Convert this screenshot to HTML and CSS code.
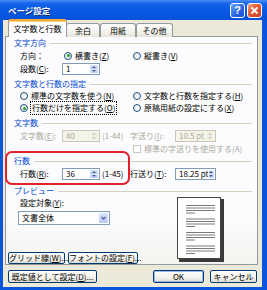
FILE: index.html
```html
<!DOCTYPE html>
<html lang="ja">
<head>
    <meta charset="UTF-8">
    <title>ページ設定</title>
    <link rel="stylesheet" href="styles.css">
</head>
<body>
<div class="window">
    <div class="titlebar">
        <span class="title">ページ設定</span>
        <span class="title-btn help">?</span>
        <span class="title-btn close">
            <svg width="9" height="9" viewBox="0 0 9 9"><path d="M1.5 1.5L7.5 7.5M7.5 1.5L1.5 7.5" stroke="#fff" stroke-width="1.8"/></svg>
        </span>
    </div>

    <div class="dialog">
        <div class="tabs">
            <div class="tab active">文字数と行数</div>
            <div class="tab w34">余白</div>
            <div class="tab w36">用紙</div>
            <div class="tab w37">その他</div>
        </div>

        <div class="panel">
            <div class="group">文字方向</div>
            <div class="row h13">
                <span class="label">方向：</span>
                <span class="item w71"><i class="radio checked"></i>横書き(<u>Z</u>)</span>
                <span class="item"><i class="radio"></i>縦書き(<u>V</u>)</span>
            </div>
            <div class="row h14">
                <span class="label">段数(<u>C</u>):</span>
                <span class="spin w38"><span class="val">1</span><span class="arrows"><i class="up"></i><i class="down"></i></span></span>
            </div>

            <div class="group mt2">文字数と行数の指定</div>
            <div class="row">
                <span class="item w113"><i class="radio"></i>標準の文字数を使う(<u>N</u>)</span>
                <span class="item"><i class="radio"></i>文字数と行数を指定する(<u>H</u>)</span>
            </div>
            <div class="row">
                <span class="item w113"><i class="radio checked"></i><span class="focus">行数だけを指定する(<u>O</u>)</span></span>
                <span class="item"><i class="radio"></i>原稿用紙の設定にする(<u>X</u>)</span>
            </div>

            <div class="group mt3">文字数</div>
            <div class="row h13 disabled">
                <span class="label">文字数(<u>E</u>):</span>
                <span class="spin w38 off"><span class="val">40</span><span class="arrows"><i class="up"></i><i class="down"></i></span></span>
                <span class="range">(1-44)</span>
                <span class="label w45">字送り(<u>I</u>):</span>
                <span class="spin w41 off"><span class="val">10.5 pt</span><span class="arrows"><i class="up"></i><i class="down"></i></span></span>
            </div>
            <div class="row h13 disabled">
                <span class="item indent"><i class="check"></i>標準の字送りを使用する(A)</span>
            </div>

            <div class="group">行数</div>
            <div class="row h13">
                <span class="label">行数(<u>R</u>):</span>
                <span class="spin w38"><span class="val">36</span><span class="arrows"><i class="up"></i><i class="down"></i></span></span>
                <span class="range">(1-45)</span>
                <span class="label w45">行送り(<u>T</u>):</span>
                <span class="spin w41"><span class="val">18.25 pt</span><span class="arrows"><i class="up"></i><i class="down"></i></span></span>
            </div>

            <div class="group mt5">プレビュー</div>
            <div class="preview">
                <div class="preview-left">
                    <div class="row">設定対象(<u>Y</u>):</div>
                    <div class="select">
                        <span class="val">文書全体</span>
                        <span class="drop">
                            <svg width="5" height="4" viewBox="0 0 5 4"><path d="M0.5 0.8L2.5 3L4.5 0.8" fill="none" stroke="#4d6185" stroke-width="1.2"/></svg>
                        </span>
                    </div>
                    <div class="panel-buttons">
                        <button class="btn w57">グリッド線(<u>W</u>)...</button>
                        <button class="btn w70">フォントの設定(<u>F</u>)...</button>
                    </div>
                </div>
                <svg class="page" width="47" height="65" viewBox="0 0 47 65">
                    <rect x="2" y="2" width="45" height="63" fill="#3a3a3a"/>
                    <rect x="0.5" y="0.5" width="43" height="61" fill="#fff" stroke="#444"/>
                    <g fill="#7a7a7a">
                        <rect x="9" y="8" width="29" height="1"/>
                        <rect x="9" y="10.5" width="29" height="1"/>
                        <rect x="9" y="13" width="29" height="1"/>
                        <rect x="9" y="15.5" width="9" height="1"/>
                        <rect x="9" y="21.5" width="29" height="1"/>
                        <rect x="9" y="24" width="29" height="1"/>
                        <rect x="9" y="26.5" width="29" height="1"/>
                        <rect x="9" y="29" width="9" height="1"/>
                        <rect x="9" y="35" width="29" height="1"/>
                        <rect x="9" y="37.5" width="29" height="1"/>
                        <rect x="9" y="40" width="29" height="1"/>
                        <rect x="9" y="42.5" width="9" height="1"/>
                        <rect x="9" y="48.5" width="29" height="1"/>
                        <rect x="9" y="51" width="29" height="1"/>
                        <rect x="9" y="53.5" width="29" height="1"/>
                        <rect x="9" y="56" width="9" height="1"/>
                    </g>
                </svg>
            </div>

            <div class="highlight"></div>
        </div>

        <div class="footer">
            <button class="btn w89">既定値として設定(<u>D</u>)...</button>
            <button class="btn default w51">OK</button>
            <button class="btn w47">キャンセル</button>
        </div>
    </div>
</div>
</body>
</html>
```

FILE: styles.css
```css
body {
    margin: 0;
    font-family: "Noto Sans CJK JP", "Liberation Sans", sans-serif;
    font-size: 8px;
    line-height: 12px;
    color: #000;
    background: #fff;
}

u {
    text-decoration: underline;
    text-underline-offset: 1px;
}

.window {
    width: 267px;
    height: 290px;
    display: flex;
    flex-direction: column;
    background: #0a55dc;
    overflow: hidden;
}

/* title bar */
.titlebar {
    height: 20px;
    display: flex;
    align-items: center;
    padding: 0 5px 0 8px;
    background: linear-gradient(to bottom, #4a8ef5 0%, #1463ea 18%, #0558e6 55%, #0752d8 100%);
}

.title {
    flex: 1;
    color: #fff;
    font-weight: bold;
    font-size: 8.5px;
    text-shadow: 1px 1px 0 #0b2c86;
}

.title-btn {
    width: 13px;
    height: 13px;
    border: 1px solid #fff;
    border-radius: 3px;
    margin-left: 2px;
    display: flex;
    align-items: center;
    justify-content: center;
    color: #fff;
    font-family: "Liberation Sans", sans-serif;
    font-weight: bold;
    font-size: 11px;
}

.help {
    background: linear-gradient(135deg, #6fa6ff, #2763e0 60%, #1a52d0);
}

.close {
    background: linear-gradient(135deg, #f3a07f, #e35a36 45%, #cc4020);
}

/* dialog body */
.dialog {
    flex: 1;
    margin: 0 5px 3px 3px;
    padding: 0 4px 0 2px;
    background: #ece9d8;
    display: flex;
    flex-direction: column;
}

.tabs {
    height: 17px;
    display: flex;
    align-items: flex-end;
    padding-left: 3px;
    position: relative;
    z-index: 1;
    margin-bottom: -1px;
}

.tab {
    height: 13px;
    border: 1px solid #919b9c;
    border-bottom: none;
    border-radius: 3px 3px 0 0;
    background: linear-gradient(to bottom, #fff, #f0efe9 70%, #e6e4db);
    text-align: center;
    line-height: 13px;
    box-sizing: content-box;
}

.tab.active {
    width: 57px;
    height: 16px;
    line-height: 16px;
    border-top: 2px solid #f4a93a;
    background: #fcfcfe;
    margin-right: -1px;
    box-shadow: inset 0 1px 0 #ffd37a;
}

.w34 { width: 32px; }
.w36 { width: 34px; }
.w37 { width: 35px; }

.panel {
    height: 227px;
    border: 1px solid #919b9c;
    background: linear-gradient(to bottom, #fcfcfe 80%, #f4f3ee);
    padding: 0 5px 0 8px;
    position: relative;
}

/* group headings */
.group {
    height: 12px;
    display: flex;
    align-items: center;
    color: #0046d5;
}

.group::after {
    content: "";
    flex: 1;
    height: 1px;
    margin-left: 4px;
    background: #d0d0bf;
}

.mt2 { margin-top: 2px; }
.mt3 { margin-top: 3px; }
.mt5 { margin-top: 5px; }

/* rows */
.row {
    height: 12px;
    display: flex;
    align-items: center;
    padding-left: 6px;
    white-space: nowrap;
}

.h13 { height: 13px; }
.h14 { height: 14px; }

.disabled {
    color: #aca899;
}

.label {
    width: 42px;
    flex: none;
}

.w45 { width: 45px; }

.item {
    display: flex;
    align-items: center;
    flex: none;
}

.w71 { width: 69px; padding-left: 2px; }
.w113 { width: 113px; }
.indent { margin-left: 113px; }

.radio {
    width: 6px;
    height: 6px;
    border: 1px solid #1c5180;
    border-radius: 50%;
    background: radial-gradient(circle at 60% 60%, #fff, #e3e2dc);
    margin-right: 3px;
    display: flex;
    align-items: center;
    justify-content: center;
}

.radio.checked::after {
    content: "";
    width: 3px;
    height: 3px;
    border-radius: 50%;
    background: #21a121;
}

.check {
    width: 6px;
    height: 6px;
    border: 1px solid #c9c7ba;
    background: #fff;
    margin-right: 3px;
}

.focus {
    outline: 1px dotted #000;
    outline-offset: 0;
    padding: 0 1px;
}

.range {
    width: 28px;
    padding-left: 2px;
    flex: none;
}

/* spin boxes */
.spin {
    height: 10px;
    border: 1px solid #7f9db9;
    background: #fff;
    display: flex;
    align-items: stretch;
    flex: none;
    color: #000;
}

.spin .val {
    flex: 1;
    padding-left: 3px;
    line-height: 10px;
}

.w38 { width: 36px; }
.w41 { width: 39px; }

.arrows {
    width: 8px;
    display: flex;
    flex-direction: column;
    padding: 1px 1px 1px 0;
    gap: 0;
}

.arrows i {
    flex: 1;
    background: linear-gradient(to bottom, #dce6fd, #b6c8f6);
    border-radius: 1px;
    display: flex;
    align-items: center;
    justify-content: center;
}

.arrows .up::after {
    content: "";
    border-left: 2px solid transparent;
    border-right: 2px solid transparent;
    border-bottom: 2px solid #4d6185;
}

.arrows .down::after {
    content: "";
    border-left: 2px solid transparent;
    border-right: 2px solid transparent;
    border-top: 2px solid #4d6185;
}

.spin.off {
    background: #f5f4ea;
    border-color: #c9c7ba;
    color: #aca899;
}

.spin.off .arrows i {
    background: #f0efe8;
}

.spin.off .arrows i::after {
    border-bottom-color: #c9c7ba;
    border-top-color: #c9c7ba;
}

/* preview */
.preview {
    display: flex;
}

.preview-left {
    width: 163px;
    flex: none;
}

.select {
    width: 90px;
    height: 12px;
    margin: 2px 0 0 4px;
    border: 1px solid #7f9db9;
    background: #fff;
    display: flex;
    align-items: stretch;
}

.select .val {
    flex: 1;
    padding-left: 3px;
    line-height: 12px;
}

.select .drop {
    width: 9px;
    margin: 1px;
    border-radius: 1px;
    background: linear-gradient(to bottom, #dce6fd, #b6c8f6);
    display: flex;
    align-items: center;
    justify-content: center;
}

.panel-buttons {
    display: flex;
    gap: 3px;
    margin: 27px 0 0 -6px;
}

.page {
    display: block;
}

/* red annotation box */
.highlight {
    position: absolute;
    left: -1px;
    top: 114px;
    width: 125px;
    height: 34px;
    box-sizing: border-box;
    border: 2px solid #e3202b;
    border-radius: 7px;
}

/* buttons */
.btn {
    height: 12px;
    padding: 0;
    border: 1px solid #003c74;
    border-radius: 2px;
    background: linear-gradient(to bottom, #fff, #f3f2ec 60%, #dedbd0);
    font-family: inherit;
    font-size: 8px;
    line-height: 10px;
    color: #000;
    box-sizing: border-box;
    white-space: nowrap;
}

.w57 { width: 57px; }
.w70 { width: 70px; }
.w89 { width: 89px; height: 13px; }
.w51 { width: 51px; height: 13px; margin-left: auto; }
.w47 { width: 47px; height: 13px; margin-left: 6px; }

.btn.default {
    box-shadow: inset 0 0 0 1px #9cb8ee;
}

.footer {
    display: flex;
    padding: 5px 1px 0 3px;
}
```
